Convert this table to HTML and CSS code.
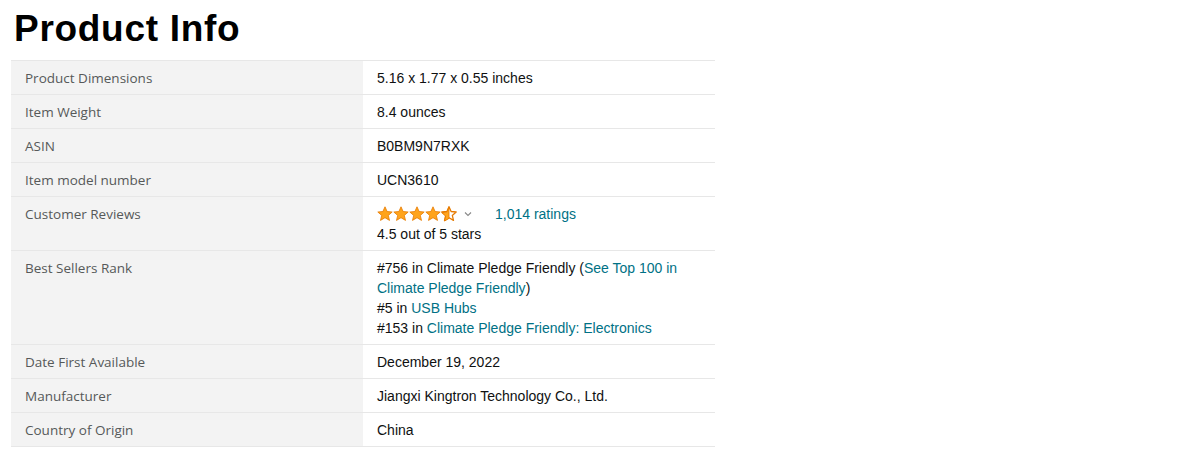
FILE: index.html
```html
<!DOCTYPE html>
<html>
<head>
<meta charset="utf-8">
<link rel="stylesheet" href="styles.css">
</head>
<body>
<div class="page">
  <h1 class="title">Product Info</h1>
  <table class="info">
    <tr><th>Product Dimensions</th><td>5.16 x 1.77 x 0.55 inches</td></tr>
    <tr><th>Item Weight</th><td>8.4 ounces</td></tr>
    <tr><th>ASIN</th><td>B0BM9N7RXK</td></tr>
    <tr><th>Item model number</th><td>UCN3610</td></tr>
    <tr><th>Customer Reviews</th><td>
      <div class="rating">
        <svg class="stars" width="82" height="16" viewBox="0 0 82 16">
          <g fill="#FFA41C" stroke="#E67A00" stroke-width="0.8" stroke-linejoin="round">
            <path transform="translate(0 0)" d="M8 0.8l2.1 4.7 5.1 0.5-3.9 3.4 1.2 5-4.5-2.7-4.5 2.7 1.2-5-3.9-3.4 5.1-0.5z"/>
            <path transform="translate(16 0)" d="M8 0.8l2.1 4.7 5.1 0.5-3.9 3.4 1.2 5-4.5-2.7-4.5 2.7 1.2-5-3.9-3.4 5.1-0.5z"/>
            <path transform="translate(32 0)" d="M8 0.8l2.1 4.7 5.1 0.5-3.9 3.4 1.2 5-4.5-2.7-4.5 2.7 1.2-5-3.9-3.4 5.1-0.5z"/>
            <path transform="translate(48 0)" d="M8 0.8l2.1 4.7 5.1 0.5-3.9 3.4 1.2 5-4.5-2.7-4.5 2.7 1.2-5-3.9-3.4 5.1-0.5z"/>
          </g>
          <g transform="translate(64 0)">
            <path d="M8 0.8l2.1 4.7 5.1 0.5-3.9 3.4 1.2 5-4.5-2.7-4.5 2.7 1.2-5-3.9-3.4 5.1-0.5z" fill="#fff" stroke="#E67A00" stroke-width="1.3" stroke-linejoin="round"/>
            <path d="M8 0.8 L8 12.4 L3.5 15.1 L4.7 10.1 L0.8 6.7 L5.9 6.2 Z" fill="#FFA41C" stroke="#E67A00" stroke-width="0.8" stroke-linejoin="round"/>
          </g>
        </svg>
        <svg class="chev" width="8" height="6" viewBox="0 0 8 6"><path d="M1 1.5l3 3 3-3" fill="none" stroke="#888" stroke-width="1.1"/></svg>
        <a class="link" href="#">1,014 ratings</a>
      </div>
      <div>4.5 out of 5 stars</div>
    </td></tr>
    <tr><th>Best Sellers Rank</th><td>
      <div>#756 in Climate Pledge Friendly (<a class="link" href="#">See Top 100 in Climate Pledge Friendly</a>)</div>
      <div>#5 in <a class="link" href="#">USB Hubs</a></div>
      <div>#153 in <a class="link" href="#">Climate Pledge Friendly: Electronics</a></div>
    </td></tr>
    <tr><th>Date First Available</th><td>December 19, 2022</td></tr>
    <tr><th>Manufacturer</th><td>Jiangxi Kingtron Technology Co., Ltd.</td></tr>
    <tr><th>Country of Origin</th><td>China</td></tr>
  </table>
</div>
</body>
</html>
```
FILE: styles.css
```css
html, body {
  margin: 0;
  padding: 0;
  background: #fff;
}
.page {
  padding: 0 11px;
  font-family: "Liberation Sans", Arial, sans-serif;
}
.title {
  margin: 8px 0 11px 3px;
  font-size: 37px;
  line-height: 41px;
  letter-spacing: 0.7px;
  font-weight: bold;
  color: #000;
}
.info {
  width: 704px;
  border-collapse: collapse;
  border-top: 1px solid #e7e7e7;
  font-size: 14px;
  line-height: 20px;
}
.info th {
  width: 352px;
  box-sizing: border-box;
  text-align: left;
  vertical-align: top;
  font-weight: normal;
  background: #f3f3f3;
  color: #565959;
  padding: 7px 14px 6px 14px;
  border-bottom: 1px solid #e7e7e7;
  font-family: "Open Sans", "Noto Sans", sans-serif;
  font-size: 13.5px;
}
.info td {
  vertical-align: top;
  color: #0f1111;
  padding: 7px 14px 6px 14px;
  border-bottom: 1px solid #e7e7e7;
}
.link {
  color: #007185;
  text-decoration: none;
}
.rating {
  display: flex;
  align-items: center;
  height: 20px;
}
.stars {
  display: block;
}
.chev {
  margin-left: 5px;
  margin-right: 23px;
}
```
